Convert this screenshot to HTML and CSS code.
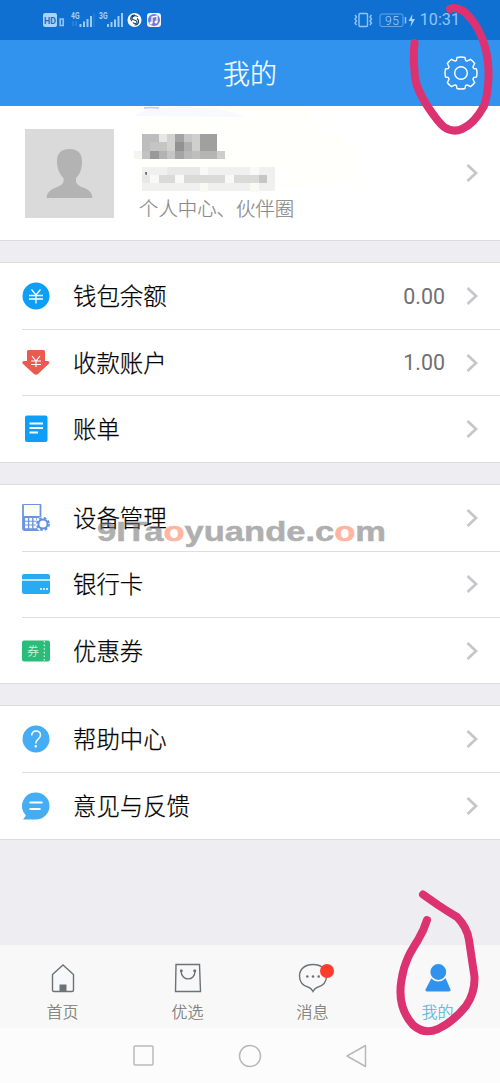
FILE: index.html
```html
<!DOCTYPE html>
<html lang="zh-CN">
<head>
<meta charset="utf-8">
<title>我的</title>
<link rel="stylesheet" href="styles.css">
</head>
<body>
<div class="phone">
  <div class="status">
    <svg class="status-left" width="125" height="20" viewBox="0 0 125 20">
      <rect x="0" y="3" width="14" height="14" rx="2" fill="#a9d3fa"/>
      <text x="1" y="13.5" font-size="9" font-weight="700" fill="#1470cf" textLength="12" lengthAdjust="spacingAndGlyphs">HD</text>
      <path d="M17.200 15.500v-6.500h3v6.500z" fill="none" stroke="#8ec4f5" stroke-width="1.700"/>
      <text x="28" y="8.500" font-size="9" font-weight="700" fill="#a9d3fa" textLength="8.500" lengthAdjust="spacingAndGlyphs">4G</text>
      <path d="M30 11v5M33 11v5" stroke="#3e90e0"/>
      <path d="M37.500 17v-3M41 17v-5.500M44.500 17v-8M48 17V6" stroke="#9bccf8" stroke-width="2"/>
      <path d="M51 17V3" stroke="#2f85da"/>
      <text x="56" y="8.500" font-size="9" font-weight="700" fill="#a9d3fa" textLength="8.500" lengthAdjust="spacingAndGlyphs">3G</text>
      <path d="M65 17v-3M68.500 17v-5M72 17v-7.500M75.500 17V6M79 17V3" stroke="#9bccf8" stroke-width="2"/>
      <circle cx="91.500" cy="10" r="7" fill="#fff"/>
      <path d="M95 7c-2-2.500-6-1-6 1.500 0 2 5 1 5 3.500 0 2-3 2-4 .5M92 5c-4-.5-5.500 4-3 6M91.500 15c4 0 5.500-4 2.500-6.500" fill="none" stroke="#16466f" stroke-width="1.100"/>
      <rect x="104" y="3" width="14" height="14" rx="3" fill="#f5f2ff"/>
      <circle cx="111" cy="10" r="6" fill="#7179d4"/>
      <path d="M109 13V7l5-1v6" fill="none" stroke="#fff" stroke-width="1.300"/>
      <circle cx="108" cy="13" r="1.500" fill="#fff"/><circle cx="113" cy="12" r="1.500" fill="#fff"/>
    </svg>
    <div class="status-right">
      <svg width="62" height="20" viewBox="0 0 62 20">
        <g fill="none" stroke="#8fc5f6">
          <rect x="5" y="3.500" width="8.500" height="13" rx="1" stroke-width="1.400"/>
          <path d="M1 5l1.500 2L1 9l1.500 2L1 13l1.500 2M17.500 5L16 7l1.500 2-1.500 2 1.500 2-1.500 2" stroke-width="1.400"/>
          <rect x="26" y="4" width="23" height="12.500" rx="2" stroke="#62a9e9"/>
          <path d="M51.500 7v6.500" stroke-width="1.500"/>
        </g>
        <text x="31" y="14.500" font-size="12" fill="#a9d3fa" textLength="14">95</text>
        <path d="M58.500 4L54.500 11h3l-1 6 4.500-8h-3z" fill="#a9d3fa"/>
      </svg>
      <span class="clock">10:31</span>
    </div>
  </div>

  <header class="header">
    <h1 class="title">我的</h1>
    <svg class="gear" width="34" height="34" viewBox="-17 -17 34 34" fill="none" stroke="#fff" stroke-width="1.400" stroke-linejoin="round">
      <path d="M-4-15.500Q0-16.500 4-15.500L4.500-12.800Q5.500-11.500 7-12.300L9.500-13.700Q12-12 13.700-9.500L12.300-7Q11.500-5.500 12.800-4.500L15.500-4Q16.500 0 15.500 4L12.800 4.500Q11.500 5.500 12.300 7L13.700 9.500Q12 12 9.500 13.700L7 12.300Q5.500 11.500 4.500 12.800L4 15.500Q0 16.500-4 15.500L-4.500 12.800Q-5.500 11.500-7 12.300L-9.500 13.700Q-12 12-13.700 9.500L-12.300 7Q-11.500 5.500-12.800 4.500L-15.500 4Q-16.500 0-15.500-4L-12.800-4.500Q-11.500-5.500-12.300-7L-13.700-9.500Q-12-12-9.500-13.700L-7-12.300Q-5.500-11.500-4.500-12.800Z"/>
      <circle r="6.300"/>
    </svg>
  </header>

  <main class="content">
    <section class="profile">
      <svg class="avatar" width="89" height="89" viewBox="0 0 89 89">
        <rect width="89" height="89" fill="#dadada"/>
        <path d="M44.500 20c8 0 12.500 4 12.500 12 0 8-2 13-6 17v3c0 3 3 5 7 6.500 6 2 9 5 9.500 10.500h-46c.5-5.500 4-8.500 9.500-10.500 4-1.500 7.500-3.500 7.500-6.500v-3c-4-4-6.500-9-6.500-17 0-8 4.500-12 12.500-12z" fill="#b3b3b3"/>
      </svg>
      <div class="profile-info">
        <svg class="mosaic" width="230" height="93" viewBox="134 106 230 93">
          <path d="M140 106h160l55 40v36l-60 8H140z" fill="#fffffc"/>
          <path d="M134 116q8-9 50-9t60 10z" fill="#f8f9ff"/>
          <path d="M144 108q7-1 15 0" fill="none" stroke="#bfc9ef" stroke-width="1.500"/>
          <g shape-rendering="crispEdges">
            <path d="M142 133.500h17v17h-17z" fill="#bdbdbd"/><path d="M159 133.500h8v8h-8z" fill="#e7e7e4"/><path d="M150 142h17v9h-17z" fill="#c5c5c5"/>
            <path d="M167 133.500h8v17h-8z" fill="#d2d2d0"/><path d="M175 133.500h9v8h-9z" fill="#a3a3a3"/><path d="M175 141.500h9v9h-9z" fill="#929292"/>
            <path d="M184 133.500h8v8h-8z" fill="#c6c6c6"/><path d="M184 141.500h8v9h-8z" fill="#b0b0b0"/><path d="M192 133.500h8v17h-8z" fill="#cfcfcf"/><path d="M200 133.500h17v17h-17z" fill="#a0a09e"/>
            <path d="M134 150.500h8v8h-8z" fill="#f4f4f2"/><path d="M142 150.500h8v8h-8z" fill="#c2c2c2"/><path d="M150 150.500h9v8h-9z" fill="#999"/><path d="M159 150.500h8v8h-8z" fill="#b3b3b3"/><path d="M167 150.500h8v8h-8z" fill="#c5c5c5"/><path d="M175 150.500h9v8h-9z" fill="#a5a5a5"/><path d="M184 150.500h8v8h-8z" fill="#b8b8b8"/><path d="M192 150.500h8v8h-8z" fill="#bebebe"/><path d="M200 150.500h17v8h-17z" fill="#b5b5b3"/><path d="M217 150.500h8v8h-8z" fill="#cdcdcb"/>
            <path d="M142 167h133v24H142z" fill="#f0f0ee"/>
            <path d="M142 175h8v8h-8zM167 167h33v8h-33z" fill="#e8e8e6"/>
            <path d="M159 175h16v8h-16zM184 175h41v8h-41zM234 175h33v8h-33z" fill="#dadad9"/>
            <path d="M150 175h9v8h-9zM175 175h9v8h-9zM200 167h8v8h-8zM225 175h9v8h-9zM200 183h8v9h-8zM250 167h9v8h-9zM250 183h9v9h-9z" fill="#f9f9f6"/>
            <path d="M259 175h8v8h-8z" fill="#c6c6c6"/>
          </g>
          <path d="M145 172h2v3h-1l-1-1z" fill="#777"/>
        </svg>
        <div class="subtitle">个人中心、伙伴圈</div>
      </div>
      <svg class="chevron" viewBox="0 0 12 18"><path d="M1.500 1l8.500 8-8.500 8"/></svg>
    </section>

    <section class="group">
      <div class="row">
        <svg class="icon" viewBox="0 0 28 28"><circle cx="14" cy="14" r="13.500" fill="#0d9ef8"/><path d="M9.500 7.500L14 13l4.500-5.500M7 13.500h14M7 17h14M14 13v8.500" fill="none" stroke="#fff" stroke-width="1.300"/></svg>
        <span class="label">钱包余额</span><span class="value">0.00</span>
        <svg class="chevron" viewBox="0 0 12 18"><path d="M1.500 1l8.500 8-8.500 8"/></svg>
      </div>
      <div class="row">
        <svg class="icon" viewBox="0 0 28 28"><path d="M6.500 1h15q1.500 0 1.500 1.500V12h3q2.500 1 .5 3L16 25q-2 1.500-4 0L1 15q-1.500-2 .5-3H5V2.500Q5 1 6.500 1z" fill="#ea5a4f"/><path d="M10 7l4 5 4-5M9 12h10M9 15.500h10M14 12v6" fill="none" stroke="#fff" stroke-width="1.200"/></svg>
        <span class="label">收款账户</span><span class="value">1.00</span>
        <svg class="chevron" viewBox="0 0 12 18"><path d="M1.500 1l8.500 8-8.500 8"/></svg>
      </div>
      <div class="row">
        <svg class="icon" viewBox="0 0 28 28"><rect x="3" y=".5" width="22.500" height="26.500" rx="2" fill="#0d9ef8"/><path d="M7.500 8.500H21M7.500 13H21M7.500 17.500H16" stroke="#fff" stroke-width="1.800"/></svg>
        <span class="label">账单</span>
        <svg class="chevron" viewBox="0 0 12 18"><path d="M1.500 1l8.500 8-8.500 8"/></svg>
      </div>
    </section>

    <section class="group">
      <div class="row">
        <svg class="icon" viewBox="0 0 28 28"><rect x="1" y="0" width="17.500" height="26" rx="1.500" fill="#fff" stroke="#6e94df" stroke-width="1.800"/><path d="M1 12h17.500v14H1z" fill="#6e94df"/><path d="M4.500 14v11M8.700 14v11M12.900 14v11M16.500 14v4" stroke="#fff" stroke-width="2.800" stroke-dasharray="2.700 1.100"/><circle cx="21" cy="20" r="7.500" fill="#fff"/><circle cx="21" cy="20" r="4.600" fill="none" stroke="#5e90e2" stroke-width="2"/><circle cx="21" cy="20" r="6.100" fill="none" stroke="#5e90e2" stroke-width="1.700" stroke-dasharray="2.700 2.090"/></svg>
        <span class="label">设备管理</span>
        <svg class="chevron" viewBox="0 0 12 18"><path d="M1.500 1l8.500 8-8.500 8"/></svg>
        <svg class="watermark" width="300" height="36" viewBox="0 0 300 36"><text x="3" y="25" textLength="289" lengthAdjust="spacingAndGlyphs">9ITa<tspan class="accent">o</tspan>yuande.c<tspan class="accent">o</tspan>m</text></svg>
      </div>
      <div class="row">
        <svg class="icon" viewBox="0 0 28 28"><rect y="4" width="28" height="20" rx="2" fill="#29abf2"/><path d="M0 10h28" stroke="#fff" stroke-width="1.400"/><path d="M18 19h2M21 19h2M24 19h2" stroke="#fff" stroke-width="1.600"/></svg>
        <span class="label">银行卡</span>
        <svg class="chevron" viewBox="0 0 12 18"><path d="M1.500 1l8.500 8-8.500 8"/></svg>
      </div>
      <div class="row">
        <svg class="icon" viewBox="0 0 28 28"><rect y="3.500" width="28" height="21" rx="2" fill="#2abc78"/><path d="M22.300 4v20" stroke="#d8f4e6" stroke-width="1.200" stroke-dasharray="1.600 2"/><text x="5" y="18.500" font-size="12" fill="#fff">券</text></svg>
        <span class="label">优惠券</span>
        <svg class="chevron" viewBox="0 0 12 18"><path d="M1.500 1l8.500 8-8.500 8"/></svg>
      </div>
    </section>

    <section class="group">
      <div class="row">
        <svg class="icon" viewBox="0 0 28 28"><circle cx="14" cy="14" r="13.500" fill="#45adf4"/><path d="M9.700 10.500C9.500 4.500 18.500 4.500 18.500 10c0 4-4.700 4-4.700 8.500" fill="none" stroke="#fff" stroke-width="1.500"/><circle cx="13.800" cy="21.200" r="1.200" fill="#fff"/></svg>
        <span class="label">帮助中心</span>
        <svg class="chevron" viewBox="0 0 12 18"><path d="M1.500 1l8.500 8-8.500 8"/></svg>
      </div>
      <div class="row">
        <svg class="icon" viewBox="0 0 28 28"><path d="M14 .5a13.500 13.500 0 1 1 0 27H1l3-4A13.500 13.500 0 0 1 14 .5z" fill="#45adf4"/><path d="M7.500 10.500h13M7.500 17h11" stroke="#fff" stroke-width="2"/></svg>
        <span class="label">意见与反馈</span>
        <svg class="chevron" viewBox="0 0 12 18"><path d="M1.500 1l8.500 8-8.500 8"/></svg>
      </div>
    </section>
  </main>

  <nav class="tabs">
    <div class="tab">
      <svg class="tab-icon" viewBox="0 0 34 34"><path d="M6.500 13.500L17 4l10.500 9.500V29q0 1.500-1.500 1.500H8q-1.500 0-1.500-1.500z" fill="none" stroke="#6d7276" stroke-width="1.400"/><path d="M13.500 23.500h7v7h-7z" fill="#6d7276"/></svg>
      <span>首页</span>
    </div>
    <div class="tab">
      <svg class="tab-icon" viewBox="0 0 34 34"><g fill="none" stroke="#6d7276" stroke-width="1.400"><path d="M5 3.500h23.500l1 27H4.500z"/><path d="M10 10c.5 10.500 14 10.500 14 0"/></g><circle cx="10.300" cy="9.700" r="1.500" fill="#6d7276"/><circle cx="23.700" cy="9.700" r="1.500" fill="#6d7276"/></svg>
      <span>优选</span>
    </div>
    <div class="tab">
      <svg class="tab-icon" viewBox="0 0 34 34"><path d="M17 3.500c8 0 13.500 4.500 13.500 11.500 0 6-3.500 10-9.500 11.500-2 .5-3 2-4 4-1-2-2-3.500-4-4C7 25 3.500 21 3.500 15 3.500 8 9 3.500 17 3.500z" fill="none" stroke="#6d7276" stroke-width="1.400"/><g fill="#6d7276"><circle cx="11.300" cy="15.500" r="1.300"/><circle cx="17" cy="15.500" r="1.300"/><circle cx="22.700" cy="15.500" r="1.300"/></g><circle cx="31" cy="10" r="7" fill="#fc3c2f"/></svg>
      <span>消息</span>
    </div>
    <div class="tab active">
      <svg class="tab-icon" viewBox="0 0 34 34"><path d="M10.500 17h14l5 11.500q.5 2-1.500 2H6q-2 0-1.500-2z" fill="#2f93ee"/><circle cx="17.300" cy="11" r="8.700" fill="#2f93ee" stroke="#f8f8f8" stroke-width="1.500"/></svg>
      <span>我的</span>
    </div>
  </nav>

  <div class="sysnav">
    <svg viewBox="0 0 24 24"><rect x="3" y="2" width="19" height="19" rx="1"/></svg>
    <svg viewBox="0 0 24 24"><circle cx="12" cy="12" r="10.500"/></svg>
    <svg viewBox="0 0 24 24"><path d="M20.500 1.500v21L2 12z"/></svg>
  </div>

  <svg class="strokes" width="500" height="1083" viewBox="0 0 500 1083">
    <path d="M450 9C459 5 467 13 475 24C485 40 489 58 488.500 77Q488 95 484 106Q474 124 462 129Q453 133 444 127Q438 122 428 107C417 90 414 80 414.500 70Q413 58 414.500 43"/>
    <path d="M423 894.500L438 905Q447 911 457 917Q467 927 469 940L474.500 977Q475 993 466 1006Q453 1022 438 1029Q424 1035 413 1025C403 1014 398 1000 401.500 980C404 962 411 951 418 940Q424 930 427 920"/>
  </svg>
</div>
</body>
</html>
```
FILE: styles.css
```css
* { box-sizing: border-box; }
body {
  margin: 0;
  font-family: Roboto, "Noto Sans CJK SC", sans-serif;
  font-weight: 300;
  background: #eeeef2;
}
svg { display: block; flex: none; }
.phone {
  position: relative;
  width: 500px;
  height: 1083px;
  display: flex;
  flex-direction: column;
  overflow: hidden;
}
.status {
  height: 40px;
  background: #0f70d2;
  display: flex;
  align-items: center;
  justify-content: space-between;
  padding: 0 40px 0 43px;
}
.status-right { display: flex; align-items: center; gap: 4px; }
.clock { font-size: 16.2px; font-weight: 400; color: #8fc5f6; line-height: 20px; }
.header {
  height: 66px;
  background: #3193ee;
  display: grid;
  grid-template-columns: 56px 1fr 56px;
  align-items: center;
}
.title {
  grid-column: 2;
  margin: 0;
  padding-top: 4px;
  text-align: center;
  font-size: 27px;
  line-height: 40px;
  font-weight: 300;
  color: #fff;
  -webkit-text-stroke: .25px #fff;
}
.content { flex: 1; display: flex; flex-direction: column; gap: 21px; }
.profile {
  height: 135px;
  background: #fff;
  border-bottom: 1px solid #dcdcdf;
  display: flex;
  align-items: center;
  padding: 0 22px 0 25px;
}
.profile-info { flex: 1; align-self: flex-start; padding-left: 20px; }
.subtitle {
  margin-top: -2px;
  padding-left: 5px;
  font-size: 19.4px;
  line-height: 26px;
  color: #888;
  -webkit-text-stroke: .2px #888;
}
.group {
  background: #fff;
  border-top: 1px solid #dcdcdf;
  border-bottom: 1px solid #dcdcdf;
  padding-left: 22px;
}
.row {
  position: relative;
  height: 66.2px;
  display: flex;
  align-items: center;
  padding-right: 22px;
}
.row + .row { border-top: 1px solid #dedee1; }
.icon { width: 28px; height: 28px; }
.label {
  flex: 1;
  padding: 2px 0 0 23px;
  font-size: 23.4px;
  line-height: 34px;
  color: #000;
  -webkit-text-stroke: .25px #000;
}
.value { font-size: 21.4px; color: #707070; font-weight: 400; margin-right: 21px; }
.chevron {
  width: 12px;
  height: 18px;
  fill: none;
  stroke: #c7c7cb;
  stroke-width: 2.8;
}
.watermark {
  position: absolute;
  left: 72px;
  top: 31px;
  font: 700 27px "Liberation Sans", sans-serif;
  fill: #777;
  stroke: #777;
  stroke-width: .5px;
  opacity: .58;
}
.watermark .accent { fill: #ff8060; stroke: #ff8060; }
.tabs {
  height: 83px;
  background: #f8f8f8;
  display: grid;
  grid-template-columns: repeat(4, 1fr);
}
.tab {
  display: flex;
  flex-direction: column;
  align-items: center;
  padding-top: 16px;
  font-size: 16px;
  line-height: 24px;
  color: #77776f;
  -webkit-text-stroke: .2px currentColor;
}
.tab span { margin-top: 6px; }
.tab-icon { width: 34px; height: 34px; overflow: visible; }
.active { color: #55b4dc; }
.sysnav {
  height: 55px;
  background: #fcfcfc;
  display: flex;
  justify-content: center;
  align-items: center;
  gap: 83px;
}
.sysnav svg {
  width: 24px;
  height: 24px;
  fill: none;
  stroke: #b9b9b9;
  stroke-width: 1.5;
  stroke-linejoin: round;
}
.strokes {
  position: absolute;
  left: 0;
  top: 0;
  pointer-events: none;
  fill: none;
  stroke: #dc3271;
  stroke-width: 8;
  stroke-linecap: round;
  stroke-linejoin: round;
}
```
